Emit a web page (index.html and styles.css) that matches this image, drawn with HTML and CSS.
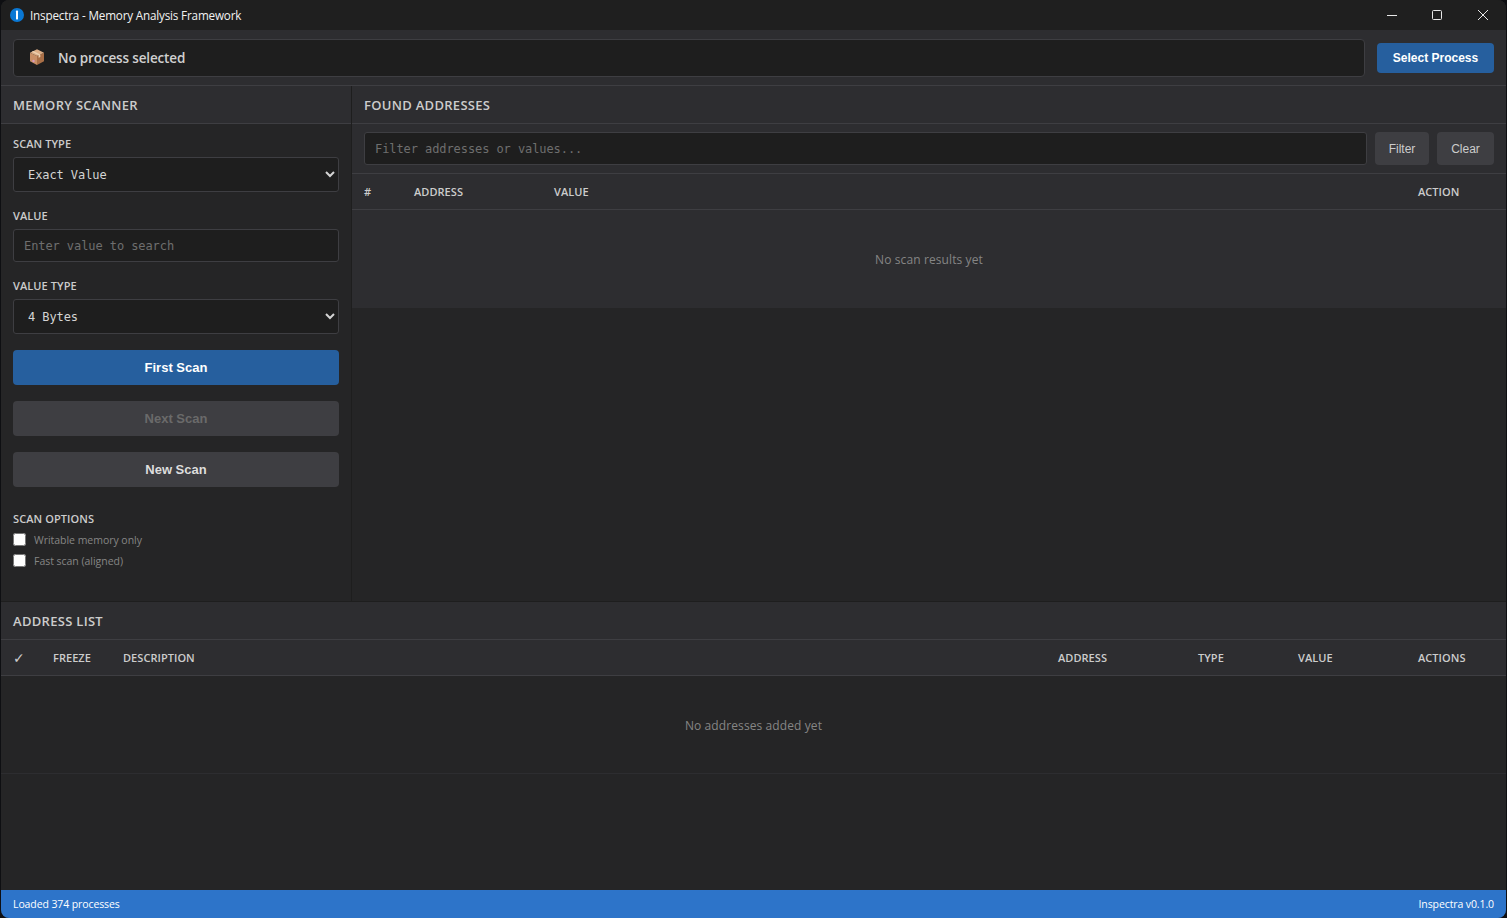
FILE: index.html
```html
<!DOCTYPE html>
<html lang="en">
<head>
<meta charset="utf-8">
<title>Inspectra - Memory Analysis Framework</title>
<link rel="stylesheet" href="styles.css">
</head>
<body>
<div class="window">
  <header class="titlebar">
    <svg class="app-icon" width="14" height="14" viewBox="0 0 14 14"><circle cx="7" cy="7" r="7" fill="#0a78d4"/><rect x="6" y="2.6" width="2" height="8.8" rx=".6" fill="#fff"/></svg>
    <span class="title">Inspectra - Memory Analysis Framework</span>
    <div class="win-controls">
      <svg class="win-btn" width="46" height="30" viewBox="0 0 46 30"><path d="M19 15.500h10" stroke="#e8e8e8" fill="none"/></svg>
      <svg class="win-btn" width="46" height="30" viewBox="0 0 46 30"><rect x="18.500" y="10.500" width="9" height="9" rx="1" stroke="#e8e8e8" fill="none"/></svg>
      <svg class="win-btn" width="46" height="30" viewBox="0 0 46 30"><path d="M18 10l10 10M28 10l-10 10" stroke="#e8e8e8" fill="none"/></svg>
    </div>
  </header>

  <div class="process-bar">
    <div class="process-display">
      <svg class="box-icon" width="16" height="16" viewBox="0 0 16 16"><path d="M8 7l7-3.300v8.500L8 16z" fill="#a96f47"/><path d="M8 7L1 3.700v8.500L8 16z" fill="#c98f66"/><path d="M1 3.700L8 .3l7 3.400L8 7z" fill="#dcae86"/><path d="M4.300 2l7 3.400v2.600l-1.700.8V6.200L2.700 2.800z" fill="#ecd0b0"/><circle cx="4.500" cy="12" r="1.200" fill="#d79ac0"/></svg>
      <span class="process-name">No process selected</span>
    </div>
    <button class="btn btn-primary btn-select">Select Process</button>
  </div>

  <main class="main">
    <aside class="scanner">
      <h2 class="panel-header">MEMORY SCANNER</h2>
      <div class="scanner-body">
        <label class="field-label label-first">SCAN TYPE</label>
        <select class="control select"><option>Exact Value</option></select>
        <label class="field-label">VALUE</label>
        <input class="control input" type="text" placeholder="Enter value to search">
        <label class="field-label">VALUE TYPE</label>
        <select class="control select"><option>4 Bytes</option></select>
        <button class="btn btn-primary btn-wide btn-first">First Scan</button>
        <button class="btn btn-disabled btn-wide">Next Scan</button>
        <button class="btn btn-secondary btn-wide">New Scan</button>
        <div class="field-label options-label">SCAN OPTIONS</div>
        <label class="check"><input type="checkbox"><span>Writable memory only</span></label>
        <label class="check"><input type="checkbox"><span>Fast scan (aligned)</span></label>
      </div>
    </aside>

    <section class="results">
      <h2 class="panel-header panel-header-right">FOUND ADDRESSES</h2>
      <div class="filter-bar">
        <input class="control filter-input" type="text" placeholder="Filter addresses or values...">
        <button class="btn btn-small">Filter</button>
        <button class="btn btn-small">Clear</button>
      </div>
      <div class="table-head found-head">
        <span>#</span><span>ADDRESS</span><span>VALUE</span><span>ACTION</span>
      </div>
      <div class="empty found-empty">No scan results yet</div>
    </section>
  </main>

  <section class="address-list">
    <h2 class="panel-header">ADDRESS LIST</h2>
    <div class="table-head list-head">
      <span class="tick">✓</span><span>FREEZE</span><span>DESCRIPTION</span><span>ADDRESS</span><span>TYPE</span><span>VALUE</span><span>ACTIONS</span>
    </div>
    <div class="empty list-empty">No addresses added yet</div>
  </section>

  <footer class="status">
    <span class="status-text">Loaded 374 processes</span>
    <span class="status-text">Inspectra v0.1.0</span>
  </footer>
</div>
</body>
</html>
```
FILE: styles.css
```css
* { box-sizing: border-box; }
html, body { margin: 0; height: 100%; background: #0e0f12; overflow: hidden; }
body { font-family: "Open Sans", "Noto Sans", sans-serif; color: #ccc; }
.window {
  height: 918px; margin: 0 1px 0 1px; display: flex; flex-direction: column;
  background: #252526; border-radius: 8px; overflow: hidden;
}
.titlebar {
  height: 30px; flex: none; display: flex; align-items: center; padding-left: 9px;
  background: #1f1f1f; color: #f2f2f2; font-size: 11.700px;
}
.app-icon { margin-right: 6px; }
.title { letter-spacing: -.18px; }
.win-controls { margin-left: auto; display: flex; }
.win-btn { display: block; }

.process-bar {
  height: 56px; flex: none; display: flex; align-items: center; padding: 0 12px;
  background: #2d2d30; border-bottom: 1px solid #3e3e42; gap: 12px;
}
.process-display {
  flex: 1; height: 38px; display: flex; align-items: center; padding-left: 15px;
  background: #1e1e1e; border: 1px solid #3e3e42; border-radius: 4px;
}
.box-icon { margin-right: 13px; margin-top: -1px; }
.process-name { font-size: 13.500px; font-weight: 600; color: #d0d0d0; letter-spacing: -.15px; padding-top: 1px; }
.btn {
  font-family: "Liberation Sans", Arial, sans-serif; border: 0; border-radius: 4px;
  font-size: 12px; padding: 0; display: block;
}
.btn-primary { background: #265f9e; color: #fff; font-weight: 700; }
.btn-select { width: 117px; height: 30px; }
.main { height: 516px; flex: none; display: flex; border-bottom: 1px solid #1e1e1e; }
.scanner { width: 351px; flex: none; border-right: 1px solid #1e1e1e; }
.panel-header {
  margin: 0; height: 38px; display: flex; align-items: center; padding: 1px 0 0 12px;
  background: #2d2d30; border-bottom: 1px solid #3e3e42;
  font-size: 13px; font-weight: 600; color: #ccc; letter-spacing: .3px;
}
.scanner-body { padding: 0 12px; display: flex; flex-direction: column; align-items: stretch; }
.field-label {
  display: block; font-size: 11px; font-weight: 600; color: #ccc; letter-spacing: .08px;
  line-height: 14px; margin: 17px 0 6px;
}
.label-first { margin-top: 13px; }
.control {
  background: #1e1e1e; border: 1px solid #3e3e42; border-radius: 3px; color: #d4d4d4;
  font-family: "DejaVu Sans Mono", "Liberation Mono", monospace; font-size: 12px;
  letter-spacing: -.08px; outline: 0;
}
.select { height: 35px; padding-left: 10px; }
.input { height: 33px; padding: 1px 10px 0; }
.control::placeholder { color: #6e6e6e; opacity: 1; }
.btn-wide { width: 100%; height: 35px; font-size: 13px; margin-bottom: 16px; }
.btn-first { margin-top: 16px; }
.btn-disabled { background: #3e3e42; color: #6a6a6a; font-weight: 700; }
.btn-secondary { background: #3e3e42; color: #ddd; font-weight: 700; }
.options-label { margin: 9px 0 3px; line-height: 14px; }
.check { display: flex; align-items: center; height: 21px; font-size: 10.500px; color: #858585; letter-spacing: -.03px; }
.check input { width: 13px; height: 13px; margin: 0 8px 0 0; }

.results { flex: 1; min-width: 0; display: flex; flex-direction: column; }
.filter-bar {
  height: 50px; flex: none; display: flex; align-items: center; gap: 8px; padding: 0 12px;
  background: #2d2d30; border-bottom: 1px solid #3e3e42;
}
.filter-input { flex: 1; height: 33px; padding: 1px 10px 0; }
.btn-small { width: 54px; height: 33px; background: #3e3e42; color: #ccc; font-size: 12px; }
.btn-small:last-child { width: 57px; }
.table-head {
  height: 36px; flex: none; display: grid; align-items: center;
  background: #2d2d30; border-bottom: 1px solid #3e3e42;
  font-size: 11px; font-weight: 600; color: #ccc; letter-spacing: .05px;
}
.found-head { grid-template-columns: 50px 140px 1fr 88px; padding-left: 12px; }
.list-head { grid-template-columns: 40px 70px 935px 140px 100px 120px 1fr; padding-left: 12px; }
.tick { font-family: "DejaVu Sans", sans-serif; font-size: 14px; font-weight: 700; }
.empty {
  height: 98px; flex: none; display: flex; align-items: center; justify-content: center;
  font-size: 12px; color: #858585; letter-spacing: .1px;
}
.found-empty { background: #2d2d30; }
.list-empty { border-bottom: 1px solid #2d2d30; padding-top: 2px; }
.address-list { flex: 1; min-height: 0; }
.status {
  height: 28px; flex: none; display: flex; justify-content: space-between; align-items: center;
  padding: 0 12px; background: #2d74c9; color: #fff; font-size: 10.500px;
}
.status-text { letter-spacing: -.1px; }
```
